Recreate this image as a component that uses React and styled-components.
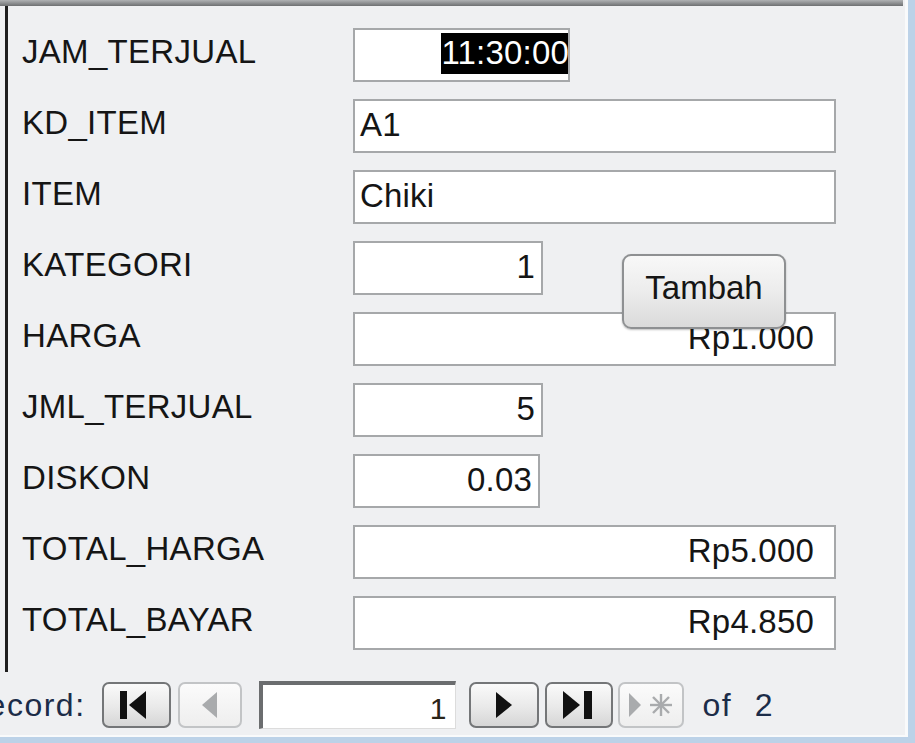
import React from 'react';
import styled, { createGlobalStyle } from 'styled-components';

const GlobalStyle = createGlobalStyle`
  html, body { margin: 0; padding: 0; }
  body {
    width: 915px;
    height: 743px;
    overflow: hidden;
    background: #bcd2e8;
    font-family: "Liberation Sans", Arial, sans-serif;
  }
`;

const Frame = styled.div`
  width: 915px;
  height: 743px;
  background: #bcd2e8;
`;

const Inner = styled.div`
  width: 908px;
  height: 737px;
  box-sizing: border-box;
  background: #eff0f2;
  border-right: 3px solid #f9fafb;
  border-bottom: 2px solid #f9fafb;
  display: flex;
  flex-direction: column;
  overflow: hidden;
`;

const TopBar = styled.div`
  height: 6px;
  margin-right: 2px;
  background: linear-gradient(#b0b2b4, #6e7072);
`;

const Body = styled.div`
  position: relative;
  margin-left: 5px;
  border-left: 3px solid #1e1e1e;
  padding: 13px 0 14px 14px;
  display: grid;
  grid-template-columns: 331px 1fr;
  grid-auto-rows: 71px;
  align-items: center;
`;

const Label = styled.div`
  font-size: 33px;
  letter-spacing: 0.3px;
  color: #151515;
  padding-bottom: 6px;
`;

const Field = styled.div`
  width: ${p => p.w}px;
  height: 54px;
  box-sizing: border-box;
  background: #fff;
  border: 2px solid #a6a8aa;
  display: flex;
  align-items: center;
  justify-content: ${p => (p.left ? 'flex-start' : 'flex-end')};
  padding: 0 ${p => p.pr || 6}px 2px 5px;
  font-size: 33px;
  letter-spacing: 0.2px;
  color: #151515;
  overflow: hidden;
  white-space: nowrap;
`;

const Selected = styled.span`
  background: #000;
  color: #fff;
  padding: 3px 0 4px 0;
  margin-right: -7px;
  line-height: 34px;
`;

const AddButton = styled.button`
  position: absolute;
  left: 614px;
  top: 248px;
  width: 164px;
  height: 75px;
  box-sizing: border-box;
  border: 2px solid #8e9092;
  border-radius: 9px;
  background: linear-gradient(#f8f8f8, #ececec 50%, #dadada);
  box-shadow: 0 1px 2px rgba(0, 0, 0, 0.25);
  font-family: inherit;
  font-size: 33px;
  color: #151515;
  padding: 0 0 8px;
`;

const Nav = styled.div`
  flex: 1;
  display: flex;
  align-items: center;
  padding-top: 3px;
`;

const NavText = styled.span`
  font-size: 32px;
  letter-spacing: 1.5px;
  word-spacing: 12px;
  color: #1c2c48;
  margin-left: ${p => p.ml}px;
  margin-right: ${p => p.mr || 0}px;
  white-space: nowrap;
`;

const NavButton = styled.div`
  width: ${p => p.w}px;
  height: 46px;
  box-sizing: border-box;
  margin-right: ${p => p.mr}px;
  border: 2px solid ${p => (p.off ? '#c2c4c6' : '#747678')};
  border-radius: 7px;
  background: ${p => (p.off ? 'linear-gradient(#fbfbfb, #eeeeee)' : 'linear-gradient(#fafafa, #e9e9e9 55%, #d6d6d6)')};
  display: flex;
  align-items: center;
  justify-content: center;
`;

const RecordBox = styled.div`
  width: 197px;
  height: 48px;
  box-sizing: border-box;
  margin-right: 13px;
  background: #fff;
  border-top: 4px solid #6b6d6f;
  border-left: 4px solid #6b6d6f;
  border-right: 1px solid #dcdcdc;
  border-bottom: 1px solid #dcdcdc;
  display: flex;
  align-items: flex-end;
  justify-content: flex-end;
  padding: 0 8px 2px 0;
  font-size: 30px;
  color: #2a2418;
`;

const Icon = ({ kind }) => {
  const on = '#111';
  const off = '#a9abad';
  if (kind === 'first')
    return (
      <svg width="32" height="28" viewBox="0 0 32 28">
        <rect x="0" y="0" width="7" height="28" fill={on} />
        <polygon points="26,0 9,14 26,28" fill={on} />
      </svg>
    );
  if (kind === 'prev')
    return (
      <svg width="18" height="28" viewBox="0 0 18 28">
        <polygon points="16,1 1,14 16,27" fill={off} />
      </svg>
    );
  if (kind === 'next')
    return (
      <svg width="18" height="28" viewBox="0 0 18 28">
        <polygon points="1,1 17,14 1,27" fill={on} />
      </svg>
    );
  if (kind === 'last')
    return (
      <svg width="32" height="28" viewBox="0 0 32 28">
        <polygon points="0,0 17,14 0,28" fill={on} />
        <rect x="21" y="0" width="8" height="28" fill={on} />
      </svg>
    );
  return (
    <svg width="46" height="28" viewBox="0 0 46 28">
      <polygon points="1,2 13,14 1,26" fill={off} />
      <g stroke={off} strokeWidth="2.4">
        <line x1="33" y1="3" x2="33" y2="25" />
        <line x1="22" y1="14" x2="44" y2="14" />
        <line x1="25" y1="6" x2="41" y2="22" />
        <line x1="41" y1="6" x2="25" y2="22" />
      </g>
    </svg>
  );
};

const rows = [
  { label: 'JAM_TERJUAL', w: 217, sel: '11:30:00' },
  { label: 'KD_ITEM', w: 483, value: 'A1', left: true },
  { label: 'ITEM', w: 483, value: 'Chiki', left: true },
  { label: 'KATEGORI', w: 190, value: '1' },
  { label: 'HARGA', w: 483, value: 'Rp1.000', pr: 20 },
  { label: 'JML_TERJUAL', w: 190, value: '5' },
  { label: 'DISKON', w: 187, value: '0.03' },
  { label: 'TOTAL_HARGA', w: 483, value: 'Rp5.000', pr: 20 },
  { label: 'TOTAL_BAYAR', w: 483, value: 'Rp4.850', pr: 20 },
];

export default function App() {
  return (
    <Frame>
      <GlobalStyle />
      <Inner>
        <TopBar />
        <Body>
          {rows.map(r => (
            <React.Fragment key={r.label}>
              <Label>{r.label}</Label>
              <Field w={r.w} left={r.left} pr={r.pr}>
                {r.sel ? <Selected>{r.sel}</Selected> : r.value}
              </Field>
            </React.Fragment>
          ))}
          <AddButton>Tambah</AddButton>
        </Body>
        <Nav>
          <NavText ml={-37} mr={16}>Record:</NavText>
          <NavButton w={69} mr={7}><Icon kind="first" /></NavButton>
          <NavButton w={64} mr={17} off><Icon kind="prev" /></NavButton>
          <RecordBox>1</RecordBox>
          <NavButton w={70} mr={6}><Icon kind="next" /></NavButton>
          <NavButton w={68} mr={5}><Icon kind="last" /></NavButton>
          <NavButton w={66} mr={0} off><Icon kind="new" /></NavButton>
          <NavText ml={19}>of 2</NavText>
        </Nav>
      </Inner>
    </Frame>
  );
}
